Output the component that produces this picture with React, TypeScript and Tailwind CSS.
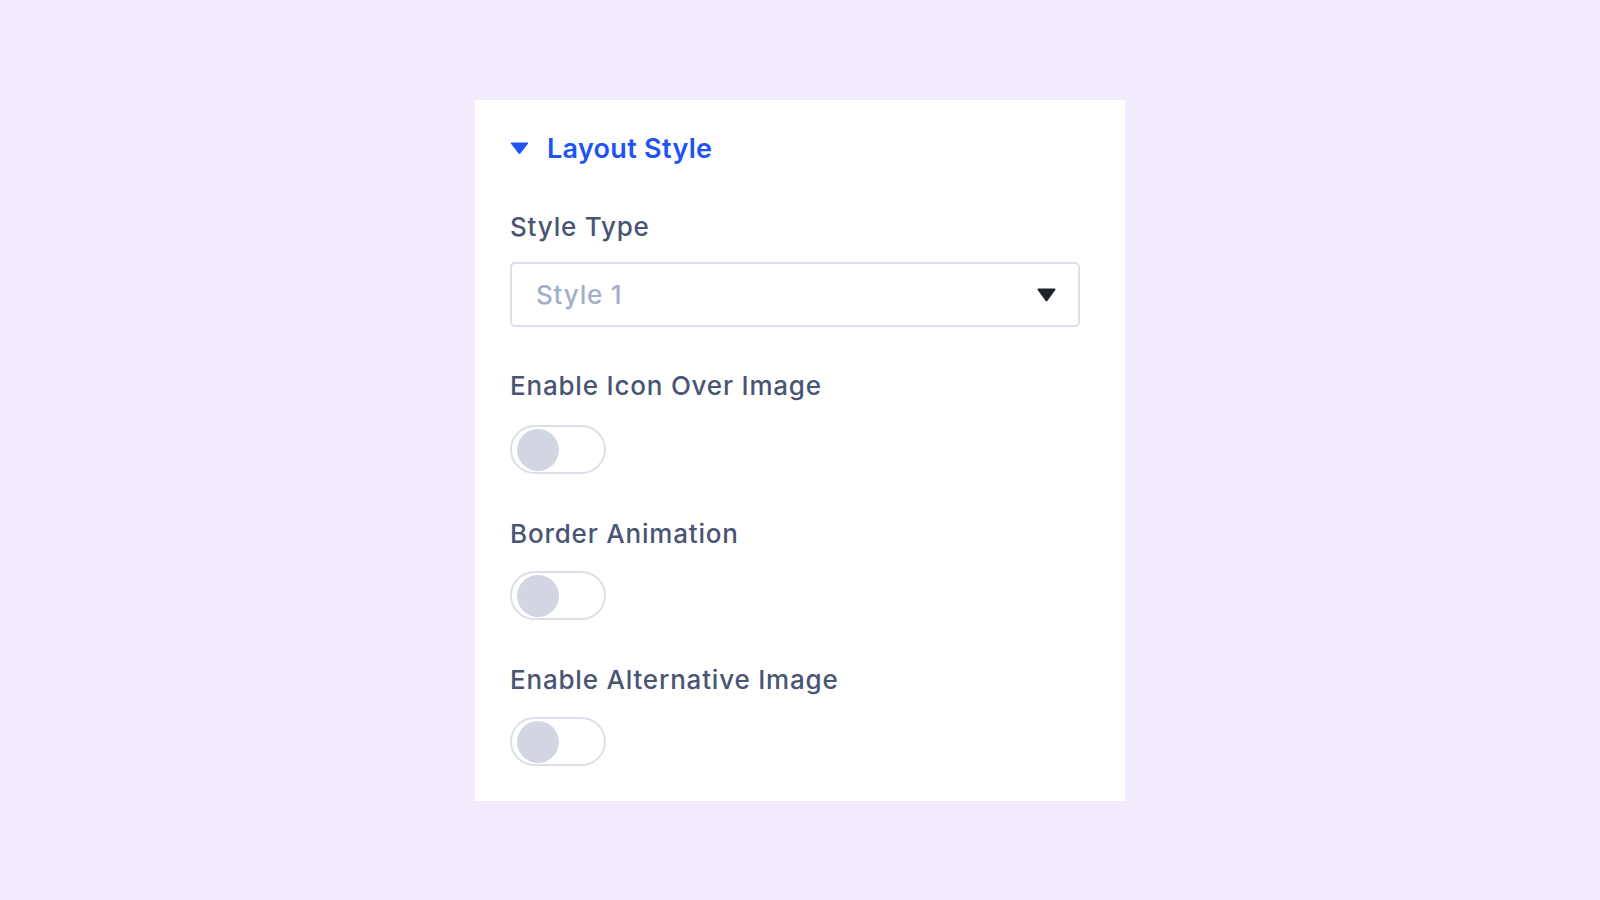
import { useState } from 'react'

function Toggle({ on, onChange }: { on: boolean; onChange: () => void }) {
  return (
    <button
      type="button"
      onClick={onChange}
      className={`flex h-[49px] w-[96px] items-center rounded-full border-2 border-[#dcdfe8] bg-white px-[5px] ${
        on ? 'justify-end' : 'justify-start'
      }`}
    >
      <span className="block h-[42px] w-[42px] rounded-full bg-[#d2d6e2]" />
    </button>
  )
}

export default function App() {
  const [open, setOpen] = useState(true)
  const [toggles, setToggles] = useState({ icon: false, border: false, alt: false })

  const items: { key: keyof typeof toggles; label: string }[] = [
    { key: 'icon', label: 'Enable Icon Over Image' },
    { key: 'border', label: 'Border Animation' },
    { key: 'alt', label: 'Enable Alternative Image' },
  ]

  return (
    <div className="min-h-screen w-full bg-[#f2eafd] pt-[100px] font-['Inter',sans-serif]">
      <div className="ml-[475px] h-[701px] w-[650px] bg-white pl-[35px] pr-[45px] pt-[30px]">
        {/* section header */}
        <button
          type="button"
          onClick={() => setOpen(!open)}
          className="flex h-[36px] items-center gap-[18px] text-[#2152f4]"
        >
          <svg width="19" height="13" viewBox="0 0 19 13" className={open ? '' : '-rotate-90'}>
            <path d="M1 1h17l-8.5 11z" fill="currentColor" stroke="currentColor" strokeLinejoin="round" />
          </svg>
          <span className="text-[27px] font-semibold leading-none tracking-[0.3px]">Layout Style</span>
        </button>

        {open && (
          <div className="mt-[46px]">
            <div className="text-[26px] font-medium leading-[30px] tracking-[0.8px] text-[#4a5574]">Style Type</div>
            <button
              type="button"
              className="mt-[20px] flex h-[65px] w-full items-center justify-between rounded-[5px] border-2 border-[#dde0ea] pl-[24px] pr-[22px]"
            >
              <span className="text-[26px] font-medium tracking-[0.8px] text-[#a3afc8]">Style 1</span>
              <svg width="19" height="14" viewBox="0 0 19 14">
                <path d="M1.5 1.5h16l-8 11z" fill="#1f2330" stroke="#1f2330" strokeWidth="2" strokeLinejoin="round" />
              </svg>
            </button>

            {items.map((item, i) => (
              <div key={item.key} className={i === 0 ? 'mt-[44px]' : 'mt-[45px]'}>
                <div className="text-[26px] font-medium leading-[30px] tracking-[0.8px] text-[#4a5574]">{item.label}</div>
                <div className={i === 0 ? 'mt-[24px]' : 'mt-[22px]'}>
                  <Toggle
                    on={toggles[item.key]}
                    onChange={() => setToggles({ ...toggles, [item.key]: !toggles[item.key] })}
                  />
                </div>
              </div>
            ))}
          </div>
        )}
      </div>
    </div>
  )
}
